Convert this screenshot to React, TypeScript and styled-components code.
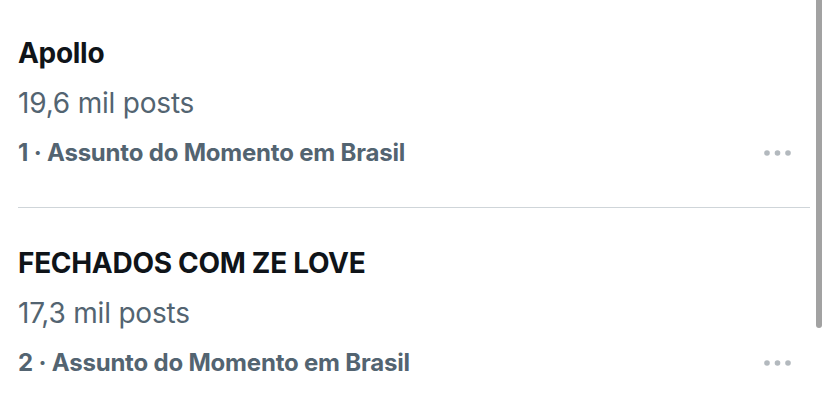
import React from "react";
import styled, { createGlobalStyle } from "styled-components";

const GlobalStyle = createGlobalStyle`
  html, body { margin: 0; padding: 0; background: #ffffff; }
  body { font-family: Inter, "Noto Sans", "Liberation Sans", sans-serif; -webkit-font-smoothing: antialiased; }
`;

const Page = styled.div`
  position: relative;
  width: 828px;
  height: 406px;
  overflow: hidden;
  background: #ffffff;
`;

const List = styled.ul`
  list-style: none;
  margin: 0;
  padding: 0 18px;
`;

const Item = styled.li<{ $first?: boolean }>`
  display: grid;
  grid-template-columns: 1fr auto;
  padding: ${(p) => (p.$first ? "28px" : "30px")} 0 29px;
  border-bottom: 1px solid #cfd5d9;
  &:last-child { border-bottom: none; }
`;

const Title = styled.div`
  grid-column: 1 / 3;
  font-size: 28px;
  font-weight: 700;
  line-height: 50px;
  color: #0f1419;
  letter-spacing: -0.3px;
`;

const Count = styled.div`
  grid-column: 1 / 3;
  font-size: 28px;
  font-weight: 400;
  line-height: 50px;
  color: #536471;
  letter-spacing: -0.2px;
`;

const Meta = styled.div`
  font-size: 24px;
  font-weight: 700;
  line-height: 50px;
  color: #536471;
  letter-spacing: -0.2px;
`;

const MoreButton = styled.button`
  align-self: center;
  border: none;
  background: none;
  padding: 0;
  margin: 0 15px 0 0;
  display: flex;
  align-items: center;
  cursor: pointer;
`;

const Scrollbar = styled.div`
  position: absolute;
  top: 0;
  right: 6px;
  width: 6px;
  height: 328px;
  border-radius: 0 0 3px 3px;
  background: #a2a2a2;
`;

const Dots = () => (
  <svg width="32" height="8" viewBox="0 0 32 8">
    <circle cx="4" cy="4" r="2.8" fill="#b3b9be" />
    <circle cx="14.5" cy="4" r="2.8" fill="#b3b9be" />
    <circle cx="25" cy="4" r="2.8" fill="#b3b9be" />
  </svg>
);

const trends = [
  { rank: 1, name: "Apollo", posts: "19,6 mil posts" },
  { rank: 2, name: "FECHADOS COM ZE LOVE", posts: "17,3 mil posts" },
];

export default function App() {
  return (
    <Page>
      <GlobalStyle />
      <List>
        {trends.map((t, i) => (
          <Item key={t.rank} $first={i === 0}>
            <Title>{t.name}</Title>
            <Count>{t.posts}</Count>
            <Meta>{t.rank} · Assunto do Momento em Brasil</Meta>
            <MoreButton aria-label="Mais">
              <Dots />
            </MoreButton>
          </Item>
        ))}
      </List>
      <Scrollbar />
    </Page>
  );
}
